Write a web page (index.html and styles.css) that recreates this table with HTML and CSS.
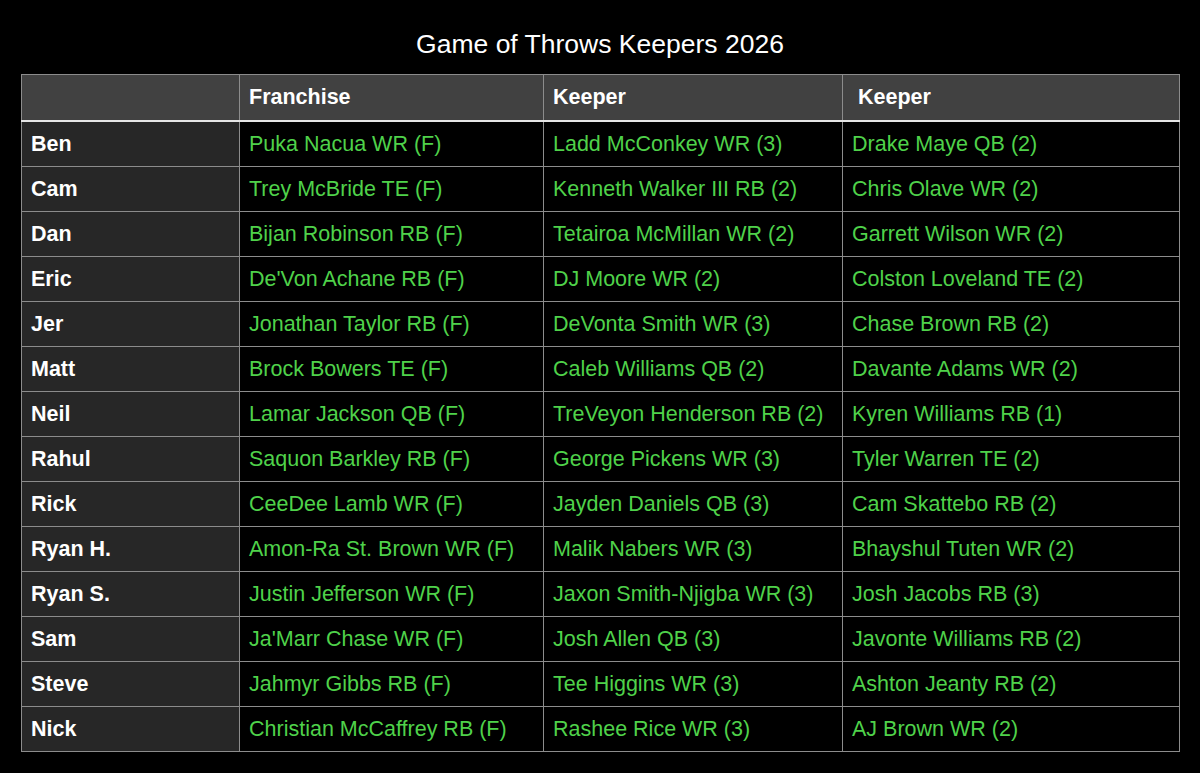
FILE: index.html
```html
<!DOCTYPE html>
<html>
<head>
<meta charset="utf-8">
<link rel="stylesheet" href="styles.css">
</head>
<body>
<div class="page">
  <h1 class="title">Game of Throws Keepers 2026</h1>
  <table class="keepers">
    <colgroup>
      <col class="c-owner"><col class="c-fr"><col class="c-k1"><col class="c-k2">
    </colgroup>
    <thead>
      <tr><th></th><th>Franchise</th><th>Keeper</th><th class="last">Keeper</th></tr>
    </thead>
    <tbody>
      <tr><th>Ben</th><td>Puka Nacua WR (F)</td><td>Ladd McConkey WR (3)</td><td>Drake Maye QB (2)</td></tr>
      <tr><th>Cam</th><td>Trey McBride TE (F)</td><td>Kenneth Walker III RB (2)</td><td>Chris Olave WR (2)</td></tr>
      <tr><th>Dan</th><td>Bijan Robinson RB (F)</td><td>Tetairoa McMillan WR (2)</td><td>Garrett Wilson WR (2)</td></tr>
      <tr><th>Eric</th><td>De'Von Achane RB (F)</td><td>DJ Moore WR (2)</td><td>Colston Loveland TE (2)</td></tr>
      <tr><th>Jer</th><td>Jonathan Taylor RB (F)</td><td>DeVonta Smith WR (3)</td><td>Chase Brown RB (2)</td></tr>
      <tr><th>Matt</th><td>Brock Bowers TE (F)</td><td>Caleb Williams QB (2)</td><td>Davante Adams WR (2)</td></tr>
      <tr><th>Neil</th><td>Lamar Jackson QB (F)</td><td>TreVeyon Henderson RB (2)</td><td>Kyren Williams RB (1)</td></tr>
      <tr><th>Rahul</th><td>Saquon Barkley RB (F)</td><td>George Pickens WR (3)</td><td>Tyler Warren TE (2)</td></tr>
      <tr><th>Rick</th><td>CeeDee Lamb WR (F)</td><td>Jayden Daniels QB (3)</td><td>Cam Skattebo RB (2)</td></tr>
      <tr><th>Ryan H.</th><td>Amon-Ra St. Brown WR (F)</td><td>Malik Nabers WR (3)</td><td>Bhayshul Tuten WR (2)</td></tr>
      <tr><th>Ryan S.</th><td>Justin Jefferson WR (F)</td><td>Jaxon Smith-Njigba WR (3)</td><td>Josh Jacobs RB (3)</td></tr>
      <tr><th>Sam</th><td>Ja'Marr Chase WR (F)</td><td>Josh Allen QB (3)</td><td>Javonte Williams RB (2)</td></tr>
      <tr><th>Steve</th><td>Jahmyr Gibbs RB (F)</td><td>Tee Higgins WR (3)</td><td>Ashton Jeanty RB (2)</td></tr>
      <tr><th>Nick</th><td>Christian McCaffrey RB (F)</td><td>Rashee Rice WR (3)</td><td>AJ Brown WR (2)</td></tr>
    </tbody>
  </table>
</div>
</body>
</html>
```
FILE: styles.css
```css
html, body {
  margin: 0;
  padding: 0;
  background: #000;
}
body {
  font-family: "Liberation Sans", Arial, Helvetica, sans-serif;
  color: #fff;
  width: 1200px;
  height: 773px;
  overflow: hidden;
}
.page {
  padding: 0 21px;
}
.title {
  margin: 0;
  height: 74px;
  font-size: 26.5px;
  font-weight: normal;
  text-align: center;
  box-sizing: border-box;
  display: flex;
  align-items: center;
  justify-content: center;
  padding-top: 14px;
}
.keepers {
  width: 1158px;
  border-collapse: collapse;
  table-layout: fixed;
  border: 1px solid #8c8c8c;
  font-size: 21.5px;
}
.c-owner { width: 218px; }
.c-fr { width: 304px; }
.c-k1 { width: 299px; }
.c-k2 { width: 337px; }
.keepers th,
.keepers td {
  border: 1px solid #8c8c8c;
  padding: 0 9px;
  text-align: left;
  white-space: nowrap;
  vertical-align: middle;
  overflow: hidden;
}
.keepers thead th {
  background: #414141;
  height: 45px;
  font-weight: bold;
  color: #fff;
  border-bottom: 2px solid #e6e6e6;
}
.keepers thead th.last {
  padding-left: 15px;
}
.keepers tbody th {
  background: #272727;
  font-weight: bold;
  color: #fff;
  height: 44px;
}
.keepers tbody td {
  background: #000;
  color: #4fd24a;
  height: 44px;
}
```
